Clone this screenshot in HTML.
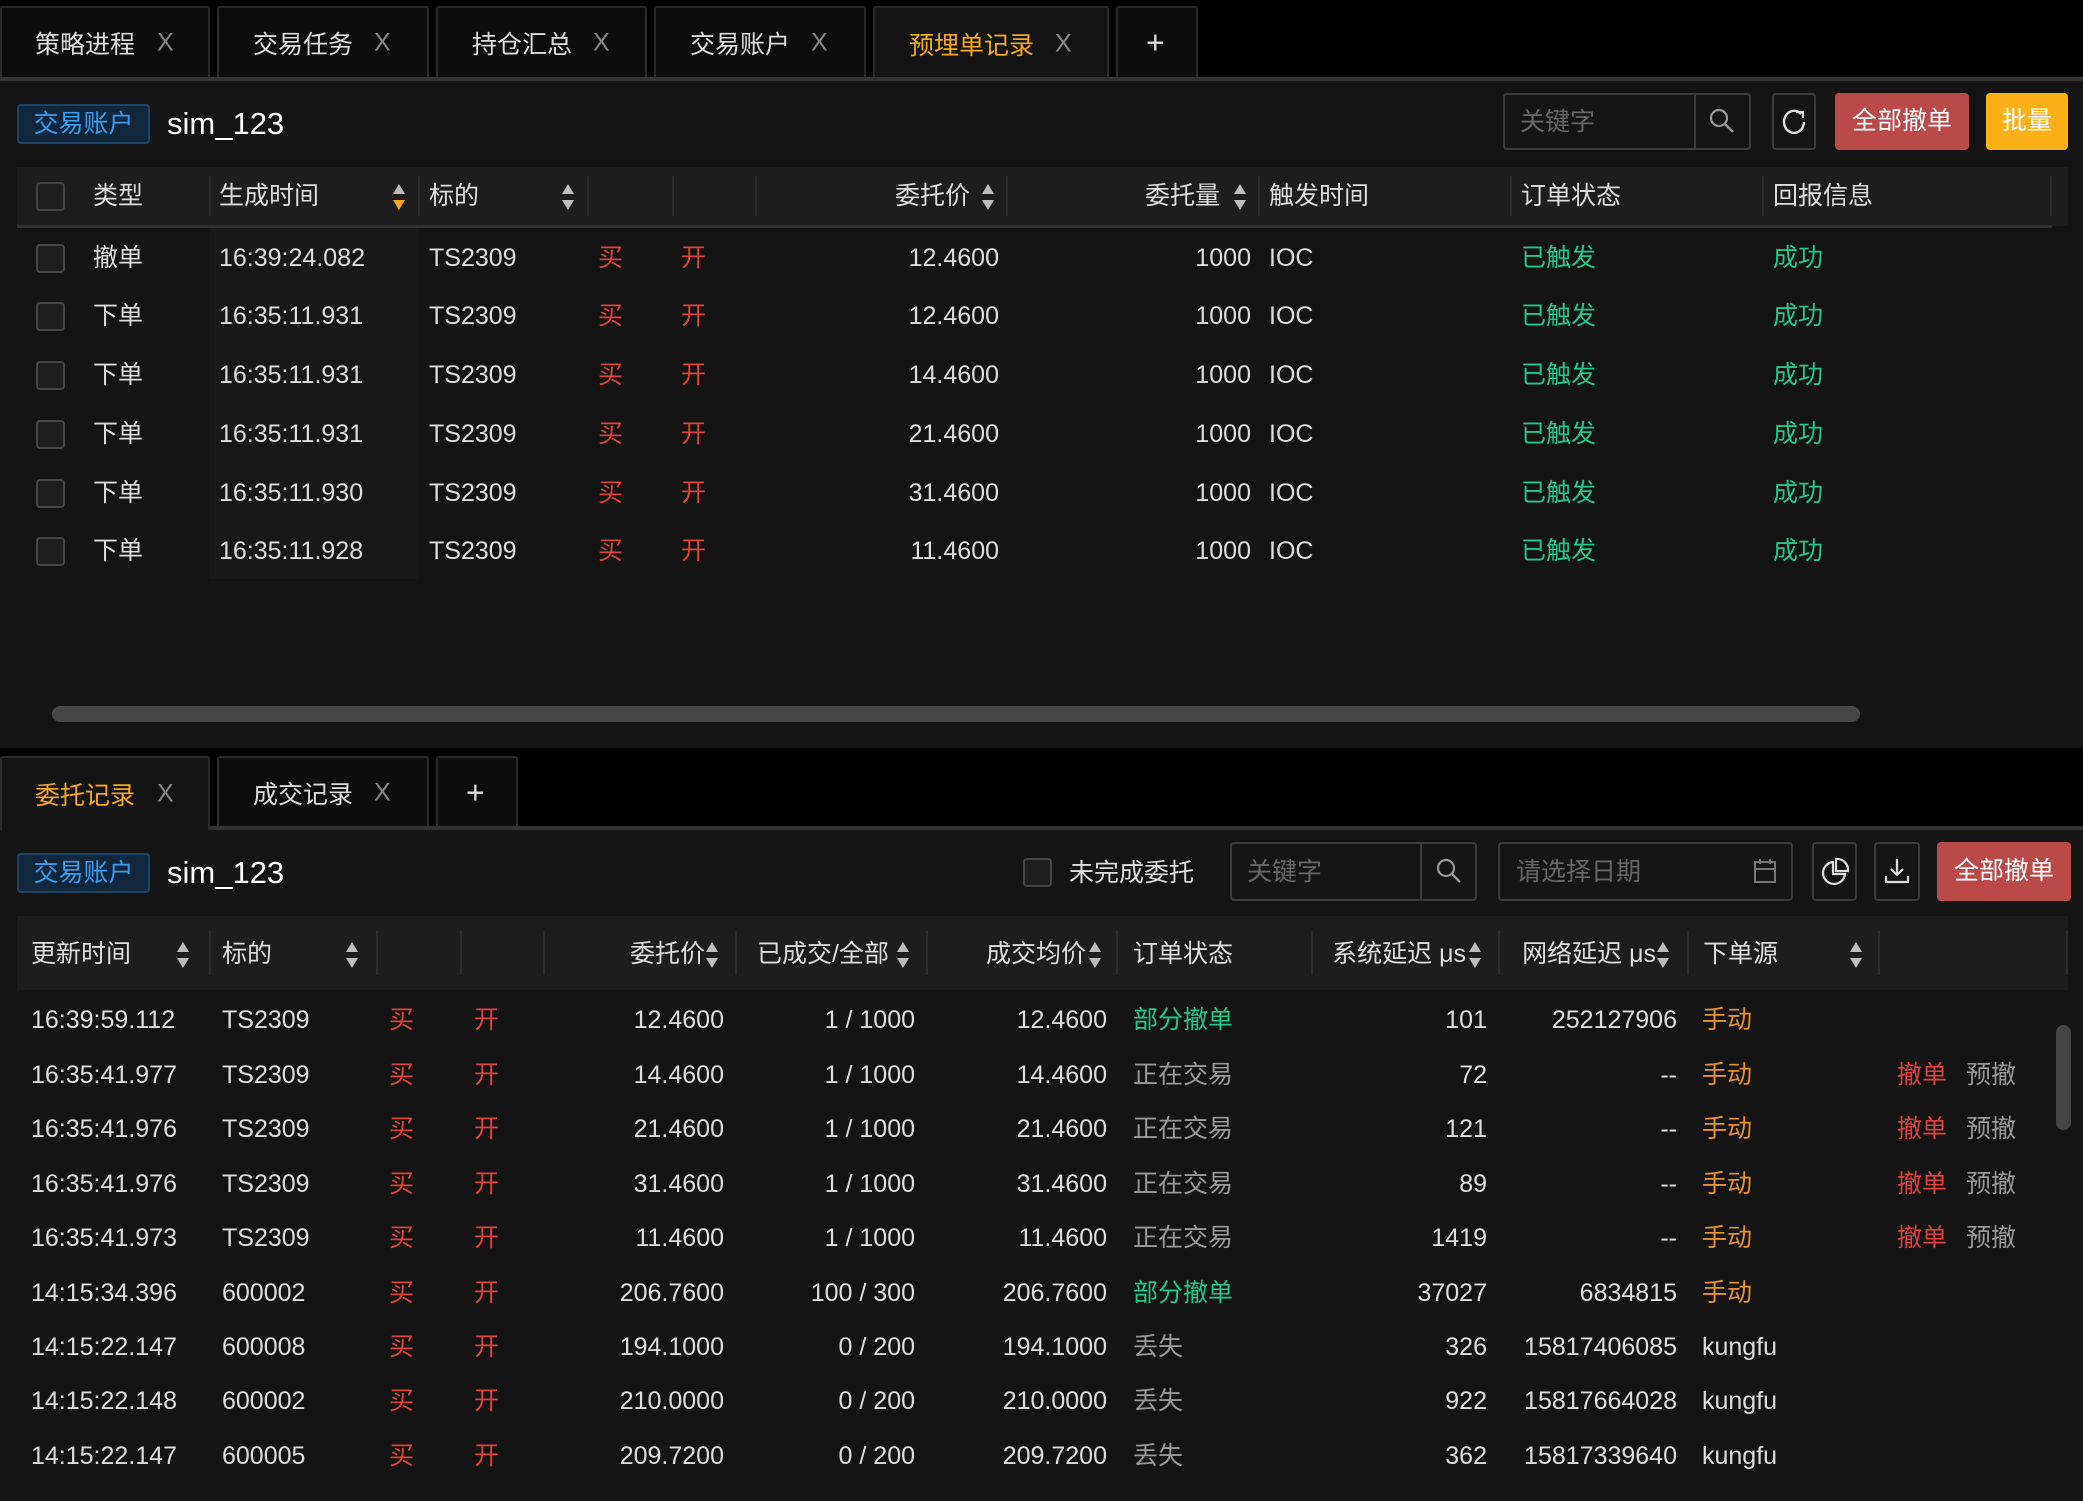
<!DOCTYPE html>
<html><head><meta charset="utf-8"><style>
*{margin:0;padding:0;box-sizing:border-box}
body{width:2083px;height:1501px;background:#000;position:relative;overflow:hidden;font-family:"Liberation Sans","Noto Sans CJK SC",sans-serif;color:#ddd}
.a{position:absolute}
.t{position:absolute;white-space:nowrap;font-size:25px;height:30px;line-height:30px}
.r{text-align:right}
.tab{position:absolute;background:#0d0d0d;border:2px solid #2a2a2a;border-bottom:none;border-radius:3px 3px 0 0}
.tab span{position:absolute;top:50%;transform:translateY(-50%);font-size:25px;white-space:nowrap}
.x{color:#888;font-size:26px}
.red{color:#e0413d}.grn{color:#22c88a}.org{color:#e8922c}.gry{color:#999}
.cb{position:absolute;width:29px;height:29px;border:2px solid #444;border-radius:4px;background:#1e1e1e}
.dv{position:absolute;width:2px;background:#2b2b2b}
.badge{position:absolute;background:#10273d;border:2px solid #1d4466;border-radius:4px;color:#3a9be8;font-size:25px;text-align:center}
.srt{position:absolute;width:14px;height:30px}
</style></head><body>
<svg width="0" height="0" style="position:absolute"><defs>
<symbol id="s" viewBox="0 0 14 30"><path d="M7 2 L13 12 L1 12Z" fill="#bbb"/><path d="M7 28 L13 18 L1 18Z" fill="#bbb"/></symbol>
<symbol id="so" viewBox="0 0 14 30"><path d="M7 2 L13 12 L1 12Z" fill="#bbb"/><path d="M7 28 L13 18 L1 18Z" fill="#f5a623"/></symbol>
</defs></svg>

<!-- top tabs -->
<div class="tab" style="left:0;top:6px;width:210px;height:72px"><span style="left:33px">策略进程</span><span class="x" style="left:155px">X</span></div>
<div class="tab" style="left:217px;top:6px;width:212px;height:72px"><span style="left:34px">交易任务</span><span class="x" style="left:155px">X</span></div>
<div class="tab" style="left:436px;top:6px;width:211px;height:72px"><span style="left:34px">持仓汇总</span><span class="x" style="left:155px">X</span></div>
<div class="tab" style="left:654px;top:6px;width:212px;height:72px"><span style="left:34px">交易账户</span><span class="x" style="left:155px">X</span></div>
<div class="tab" style="left:873px;top:6px;width:236px;height:74px;background:#141414"><span style="left:34px;color:#f5a623">预埋单记录</span><span class="x" style="left:180px">X</span></div>
<div class="tab" style="left:1116px;top:6px;width:82px;height:72px"><span style="left:28px;font-size:32px;color:#ddd">+</span></div>
<div class="a" style="left:0;top:77px;width:2083px;height:4px;background:#333"></div>

<!-- panel 1 -->
<div class="a" style="left:0;top:81px;width:2083px;height:667px;background:#141414"></div>
<div class="badge" style="left:17px;top:104px;width:133px;height:40px;line-height:36px">交易账户</div>
<div class="t" style="left:167px;top:107px;font-size:31px;height:34px;line-height:34px;color:#fff">sim_123</div>
<div class="a" style="left:1503px;top:93px;width:248px;height:57px;border:2px solid #3a3a3a;border-radius:4px;background:#151515"></div>
<div class="a" style="left:1694px;top:95px;width:2px;height:53px;background:#3a3a3a"></div>
<div class="t" style="left:1520px;top:107px;color:#666">关键字</div>
<svg class="a" style="left:1707px;top:106px" width="30" height="30" viewBox="0 0 30 30"><circle cx="12" cy="12" r="8" fill="none" stroke="#999" stroke-width="2.2"/><path d="M18 18 L26 26" stroke="#999" stroke-width="2.4"/></svg>
<div class="a" style="left:1772px;top:93px;width:44px;height:57px;border:2px solid #3a3a3a;border-radius:4px"></div>
<svg class="a" style="left:1779px;top:106px" width="30" height="32" viewBox="0 0 30 32"><path d="M22 8 A10 11 0 1 0 25 16" fill="none" stroke="#ddd" stroke-width="2.4"/><path d="M17 6 L24 6 L24 12" fill="none" stroke="#ddd" stroke-width="2.2"/></svg>
<div class="a" style="left:1835px;top:93px;width:134px;height:57px;background:#b94a48;border-radius:4px;color:#fff;font-size:25px;line-height:57px;text-align:center">全部撤单</div>
<div class="a" style="left:1986px;top:93px;width:82px;height:57px;background:#fbb017;border-radius:4px;color:#fff;font-size:25px;line-height:57px;text-align:center">批量</div>

<div class="a" style="left:17px;top:167px;width:2051px;height:59px;background:#1d1d1d"></div>
<div class="a" style="left:17px;top:225px;width:2035px;height:3px;background:#2e2e2e"></div>
<div class="a" style="left:209px;top:228px;width:210px;height:351px;background:#181818"></div>
<div class="cb" style="left:36px;top:182px"></div>
<div class="t" style="left:93px;top:181px">类型</div>
<div class="dv" style="left:209px;top:176px;height:40px"></div>
<div class="t" style="left:219px;top:181px">生成时间</div>
<svg class="srt" style="left:392px;top:182px"><use href="#so"/></svg>
<div class="dv" style="left:418px;top:176px;height:40px"></div>
<div class="t" style="left:429px;top:181px">标的</div>
<svg class="srt" style="left:561px;top:182px"><use href="#s"/></svg>
<div class="dv" style="left:587px;top:176px;height:40px"></div>
<div class="dv" style="left:672px;top:176px;height:40px"></div>
<div class="dv" style="left:755px;top:176px;height:40px"></div>
<div class="t r" style="right:1113px;top:181px">委托价</div>
<svg class="srt" style="left:981px;top:182px"><use href="#s"/></svg>
<div class="dv" style="left:1006px;top:176px;height:40px"></div>
<div class="t r" style="right:863px;top:181px">委托量</div>
<svg class="srt" style="left:1233px;top:182px"><use href="#s"/></svg>
<div class="dv" style="left:1258px;top:176px;height:40px"></div>
<div class="t" style="left:1269px;top:181px">触发时间</div>
<div class="dv" style="left:1510px;top:176px;height:40px"></div>
<div class="t" style="left:1521px;top:181px">订单状态</div>
<div class="dv" style="left:1762px;top:176px;height:40px"></div>
<div class="t" style="left:1773px;top:181px">回报信息</div>
<div class="dv" style="left:2050px;top:176px;height:40px"></div>

<!-- rows p1: centers 258,316,375,434,493,551 -->
<div class="cb" style="left:36px;top:244px"></div><div class="t" style="left:93px;top:243px">撤单</div><div class="t" style="left:219px;top:243px">16:39:24.082</div><div class="t" style="left:429px;top:243px">TS2309</div><div class="t red" style="left:598px;top:243px">买</div><div class="t red" style="left:681px;top:243px">开</div><div class="t r" style="right:1084px;top:243px">12.4600</div><div class="t r" style="right:832px;top:243px">1000</div><div class="t" style="left:1269px;top:243px">IOC</div><div class="t grn" style="left:1521px;top:243px">已触发</div><div class="t grn" style="left:1773px;top:243px">成功</div>
<div class="cb" style="left:36px;top:302px"></div><div class="t" style="left:93px;top:301px">下单</div><div class="t" style="left:219px;top:301px">16:35:11.931</div><div class="t" style="left:429px;top:301px">TS2309</div><div class="t red" style="left:598px;top:301px">买</div><div class="t red" style="left:681px;top:301px">开</div><div class="t r" style="right:1084px;top:301px">12.4600</div><div class="t r" style="right:832px;top:301px">1000</div><div class="t" style="left:1269px;top:301px">IOC</div><div class="t grn" style="left:1521px;top:301px">已触发</div><div class="t grn" style="left:1773px;top:301px">成功</div>
<div class="cb" style="left:36px;top:361px"></div><div class="t" style="left:93px;top:360px">下单</div><div class="t" style="left:219px;top:360px">16:35:11.931</div><div class="t" style="left:429px;top:360px">TS2309</div><div class="t red" style="left:598px;top:360px">买</div><div class="t red" style="left:681px;top:360px">开</div><div class="t r" style="right:1084px;top:360px">14.4600</div><div class="t r" style="right:832px;top:360px">1000</div><div class="t" style="left:1269px;top:360px">IOC</div><div class="t grn" style="left:1521px;top:360px">已触发</div><div class="t grn" style="left:1773px;top:360px">成功</div>
<div class="cb" style="left:36px;top:420px"></div><div class="t" style="left:93px;top:419px">下单</div><div class="t" style="left:219px;top:419px">16:35:11.931</div><div class="t" style="left:429px;top:419px">TS2309</div><div class="t red" style="left:598px;top:419px">买</div><div class="t red" style="left:681px;top:419px">开</div><div class="t r" style="right:1084px;top:419px">21.4600</div><div class="t r" style="right:832px;top:419px">1000</div><div class="t" style="left:1269px;top:419px">IOC</div><div class="t grn" style="left:1521px;top:419px">已触发</div><div class="t grn" style="left:1773px;top:419px">成功</div>
<div class="cb" style="left:36px;top:479px"></div><div class="t" style="left:93px;top:478px">下单</div><div class="t" style="left:219px;top:478px">16:35:11.930</div><div class="t" style="left:429px;top:478px">TS2309</div><div class="t red" style="left:598px;top:478px">买</div><div class="t red" style="left:681px;top:478px">开</div><div class="t r" style="right:1084px;top:478px">31.4600</div><div class="t r" style="right:832px;top:478px">1000</div><div class="t" style="left:1269px;top:478px">IOC</div><div class="t grn" style="left:1521px;top:478px">已触发</div><div class="t grn" style="left:1773px;top:478px">成功</div>
<div class="cb" style="left:36px;top:537px"></div><div class="t" style="left:93px;top:536px">下单</div><div class="t" style="left:219px;top:536px">16:35:11.928</div><div class="t" style="left:429px;top:536px">TS2309</div><div class="t red" style="left:598px;top:536px">买</div><div class="t red" style="left:681px;top:536px">开</div><div class="t r" style="right:1084px;top:536px">11.4600</div><div class="t r" style="right:832px;top:536px">1000</div><div class="t" style="left:1269px;top:536px">IOC</div><div class="t grn" style="left:1521px;top:536px">已触发</div><div class="t grn" style="left:1773px;top:536px">成功</div>
<div class="a" style="left:52px;top:706px;width:1808px;height:16px;background:#464646;border-radius:8px"></div>

<!-- bottom tabs -->
<div class="tab" style="left:0;top:756px;width:210px;height:74px;background:#141414"><span style="left:33px;color:#f5a623">委托记录</span><span class="x" style="left:155px">X</span></div>
<div class="tab" style="left:217px;top:756px;width:212px;height:71px"><span style="left:34px">成交记录</span><span class="x" style="left:155px">X</span></div>
<div class="tab" style="left:436px;top:756px;width:82px;height:71px"><span style="left:28px;font-size:32px">+</span></div>
<div class="a" style="left:210px;top:826px;width:1873px;height:4px;background:#333"></div>

<!-- panel 2 -->
<div class="a" style="left:0;top:830px;width:2083px;height:671px;background:#141414"></div>
<div class="badge" style="left:17px;top:853px;width:133px;height:40px;line-height:36px">交易账户</div>
<div class="t" style="left:167px;top:856px;font-size:31px;height:34px;line-height:34px;color:#fff">sim_123</div>
<div class="cb" style="left:1023px;top:858px"></div>
<div class="t" style="left:1069px;top:858px">未完成委托</div>
<div class="a" style="left:1230px;top:842px;width:247px;height:59px;border:2px solid #3a3a3a;border-radius:4px;background:#151515"></div>
<div class="a" style="left:1420px;top:844px;width:2px;height:55px;background:#3a3a3a"></div>
<div class="t" style="left:1247px;top:857px;color:#666">关键字</div>
<svg class="a" style="left:1434px;top:856px" width="30" height="30" viewBox="0 0 30 30"><circle cx="12" cy="12" r="8" fill="none" stroke="#999" stroke-width="2.2"/><path d="M18 18 L26 26" stroke="#999" stroke-width="2.4"/></svg>
<div class="a" style="left:1498px;top:842px;width:295px;height:59px;border:2px solid #3a3a3a;border-radius:4px;background:#151515"></div>
<div class="t" style="left:1516px;top:857px;color:#666">请选择日期</div>
<svg class="a" style="left:1753px;top:858px" width="24" height="26" viewBox="0 0 24 26"><rect x="2" y="4" width="20" height="20" fill="none" stroke="#777" stroke-width="2"/><path d="M2 11 H22 M7 1 V6 M17 1 V6" stroke="#777" stroke-width="2"/></svg>
<div class="a" style="left:1812px;top:842px;width:45px;height:59px;border:2px solid #3a3a3a;border-radius:4px"></div>
<svg class="a" style="left:1820px;top:857px" width="30" height="30" viewBox="0 0 30 30"><path d="M13 5 A11 11 0 1 0 25 17 L13 17 Z" fill="none" stroke="#ddd" stroke-width="2.2"/><path d="M16 2 A11 11 0 0 1 28 14 L16 14 Z" fill="none" stroke="#ddd" stroke-width="2.2"/></svg>
<div class="a" style="left:1874px;top:842px;width:46px;height:59px;border:2px solid #3a3a3a;border-radius:4px"></div>
<svg class="a" style="left:1882px;top:856px" width="30" height="30" viewBox="0 0 30 30"><path d="M15 3 V19 M9 13 L15 19 L21 13 M4 20 V26 H26 V20" fill="none" stroke="#ddd" stroke-width="2.2"/></svg>
<div class="a" style="left:1937px;top:842px;width:134px;height:59px;background:#b94a48;border-radius:4px;color:#fff;font-size:25px;line-height:59px;text-align:center">全部撤单</div>

<div class="a" style="left:17px;top:916px;width:2051px;height:74px;background:#1d1d1d"></div>
<div class="t" style="left:31px;top:939px">更新时间</div>
<svg class="srt" style="left:176px;top:940px"><use href="#s"/></svg>
<div class="dv" style="left:209px;top:931px;height:44px"></div>
<div class="t" style="left:222px;top:939px">标的</div>
<svg class="srt" style="left:345px;top:940px"><use href="#s"/></svg>
<div class="dv" style="left:376px;top:931px;height:44px"></div>
<div class="dv" style="left:460px;top:931px;height:44px"></div>
<div class="dv" style="left:543px;top:931px;height:44px"></div>
<div class="t r" style="right:1378px;top:939px">委托价</div>
<svg class="srt" style="left:705px;top:940px"><use href="#s"/></svg>
<div class="dv" style="left:735px;top:931px;height:44px"></div>
<div class="t" style="left:757px;top:939px">已成交/全部</div>
<svg class="srt" style="left:896px;top:940px"><use href="#s"/></svg>
<div class="dv" style="left:926px;top:931px;height:44px"></div>
<div class="t r" style="right:997px;top:939px">成交均价</div>
<svg class="srt" style="left:1088px;top:940px"><use href="#s"/></svg>
<div class="dv" style="left:1116px;top:931px;height:44px"></div>
<div class="t" style="left:1133px;top:939px">订单状态</div>
<div class="dv" style="left:1311px;top:931px;height:44px"></div>
<div class="t r" style="right:617px;top:939px">系统延迟 μs</div>
<svg class="srt" style="left:1468px;top:940px"><use href="#s"/></svg>
<div class="dv" style="left:1498px;top:931px;height:44px"></div>
<div class="t r" style="right:427px;top:939px">网络延迟 μs</div>
<svg class="srt" style="left:1656px;top:940px"><use href="#s"/></svg>
<div class="dv" style="left:1687px;top:931px;height:44px"></div>
<div class="t" style="left:1703px;top:939px">下单源</div>
<svg class="srt" style="left:1849px;top:940px"><use href="#s"/></svg>
<div class="dv" style="left:1878px;top:931px;height:44px"></div>
<div class="dv" style="left:2066px;top:931px;height:44px"></div>

<!-- rows p2 -->
<div class="t" style="left:31px;top:1005px">16:39:59.112</div><div class="t" style="left:222px;top:1005px">TS2309</div><div class="t red" style="left:389px;top:1005px">买</div><div class="t red" style="left:474px;top:1005px">开</div><div class="t r" style="right:1359px;top:1005px">12.4600</div><div class="t r" style="right:1168px;top:1005px">1 / 1000</div><div class="t r" style="right:976px;top:1005px">12.4600</div><div class="t grn" style="left:1133px;top:1005px">部分撤单</div><div class="t r" style="right:596px;top:1005px">101</div><div class="t r" style="right:406px;top:1005px">252127906</div><div class="t org" style="left:1702px;top:1005px">手动</div>

<div class="t" style="left:31px;top:1060px">16:35:41.977</div><div class="t" style="left:222px;top:1060px">TS2309</div><div class="t red" style="left:389px;top:1060px">买</div><div class="t red" style="left:474px;top:1060px">开</div><div class="t r" style="right:1359px;top:1060px">14.4600</div><div class="t r" style="right:1168px;top:1060px">1 / 1000</div><div class="t r" style="right:976px;top:1060px">14.4600</div><div class="t gry" style="left:1133px;top:1060px">正在交易</div><div class="t r" style="right:596px;top:1060px">72</div><div class="t r" style="right:406px;top:1060px">--</div><div class="t org" style="left:1702px;top:1060px">手动</div><div class="t red" style="left:1897px;top:1060px">撤单</div><div class="t gry" style="left:1966px;top:1060px">预撤</div>

<div class="t" style="left:31px;top:1114px">16:35:41.976</div><div class="t" style="left:222px;top:1114px">TS2309</div><div class="t red" style="left:389px;top:1114px">买</div><div class="t red" style="left:474px;top:1114px">开</div><div class="t r" style="right:1359px;top:1114px">21.4600</div><div class="t r" style="right:1168px;top:1114px">1 / 1000</div><div class="t r" style="right:976px;top:1114px">21.4600</div><div class="t gry" style="left:1133px;top:1114px">正在交易</div><div class="t r" style="right:596px;top:1114px">121</div><div class="t r" style="right:406px;top:1114px">--</div><div class="t org" style="left:1702px;top:1114px">手动</div><div class="t red" style="left:1897px;top:1114px">撤单</div><div class="t gry" style="left:1966px;top:1114px">预撤</div>

<div class="t" style="left:31px;top:1169px">16:35:41.976</div><div class="t" style="left:222px;top:1169px">TS2309</div><div class="t red" style="left:389px;top:1169px">买</div><div class="t red" style="left:474px;top:1169px">开</div><div class="t r" style="right:1359px;top:1169px">31.4600</div><div class="t r" style="right:1168px;top:1169px">1 / 1000</div><div class="t r" style="right:976px;top:1169px">31.4600</div><div class="t gry" style="left:1133px;top:1169px">正在交易</div><div class="t r" style="right:596px;top:1169px">89</div><div class="t r" style="right:406px;top:1169px">--</div><div class="t org" style="left:1702px;top:1169px">手动</div><div class="t red" style="left:1897px;top:1169px">撤单</div><div class="t gry" style="left:1966px;top:1169px">预撤</div>

<div class="t" style="left:31px;top:1223px">16:35:41.973</div><div class="t" style="left:222px;top:1223px">TS2309</div><div class="t red" style="left:389px;top:1223px">买</div><div class="t red" style="left:474px;top:1223px">开</div><div class="t r" style="right:1359px;top:1223px">11.4600</div><div class="t r" style="right:1168px;top:1223px">1 / 1000</div><div class="t r" style="right:976px;top:1223px">11.4600</div><div class="t gry" style="left:1133px;top:1223px">正在交易</div><div class="t r" style="right:596px;top:1223px">1419</div><div class="t r" style="right:406px;top:1223px">--</div><div class="t org" style="left:1702px;top:1223px">手动</div><div class="t red" style="left:1897px;top:1223px">撤单</div><div class="t gry" style="left:1966px;top:1223px">预撤</div>

<div class="t" style="left:31px;top:1278px">14:15:34.396</div><div class="t" style="left:222px;top:1278px">600002</div><div class="t red" style="left:389px;top:1278px">买</div><div class="t red" style="left:474px;top:1278px">开</div><div class="t r" style="right:1359px;top:1278px">206.7600</div><div class="t r" style="right:1168px;top:1278px">100 / 300</div><div class="t r" style="right:976px;top:1278px">206.7600</div><div class="t grn" style="left:1133px;top:1278px">部分撤单</div><div class="t r" style="right:596px;top:1278px">37027</div><div class="t r" style="right:406px;top:1278px">6834815</div><div class="t org" style="left:1702px;top:1278px">手动</div>

<div class="t" style="left:31px;top:1332px">14:15:22.147</div><div class="t" style="left:222px;top:1332px">600008</div><div class="t red" style="left:389px;top:1332px">买</div><div class="t red" style="left:474px;top:1332px">开</div><div class="t r" style="right:1359px;top:1332px">194.1000</div><div class="t r" style="right:1168px;top:1332px">0 / 200</div><div class="t r" style="right:976px;top:1332px">194.1000</div><div class="t gry" style="left:1133px;top:1332px">丢失</div><div class="t r" style="right:596px;top:1332px">326</div><div class="t r" style="right:406px;top:1332px">15817406085</div><div class="t" style="left:1702px;top:1332px">kungfu</div>

<div class="t" style="left:31px;top:1386px">14:15:22.148</div><div class="t" style="left:222px;top:1386px">600002</div><div class="t red" style="left:389px;top:1386px">买</div><div class="t red" style="left:474px;top:1386px">开</div><div class="t r" style="right:1359px;top:1386px">210.0000</div><div class="t r" style="right:1168px;top:1386px">0 / 200</div><div class="t r" style="right:976px;top:1386px">210.0000</div><div class="t gry" style="left:1133px;top:1386px">丢失</div><div class="t r" style="right:596px;top:1386px">922</div><div class="t r" style="right:406px;top:1386px">15817664028</div><div class="t" style="left:1702px;top:1386px">kungfu</div>

<div class="t" style="left:31px;top:1441px">14:15:22.147</div><div class="t" style="left:222px;top:1441px">600005</div><div class="t red" style="left:389px;top:1441px">买</div><div class="t red" style="left:474px;top:1441px">开</div><div class="t r" style="right:1359px;top:1441px">209.7200</div><div class="t r" style="right:1168px;top:1441px">0 / 200</div><div class="t r" style="right:976px;top:1441px">209.7200</div><div class="t gry" style="left:1133px;top:1441px">丢失</div><div class="t r" style="right:596px;top:1441px">362</div><div class="t r" style="right:406px;top:1441px">15817339640</div><div class="t" style="left:1702px;top:1441px">kungfu</div>

<div class="a" style="left:2056px;top:1025px;width:15px;height:105px;background:#444;border-radius:8px"></div>
</body></html>
